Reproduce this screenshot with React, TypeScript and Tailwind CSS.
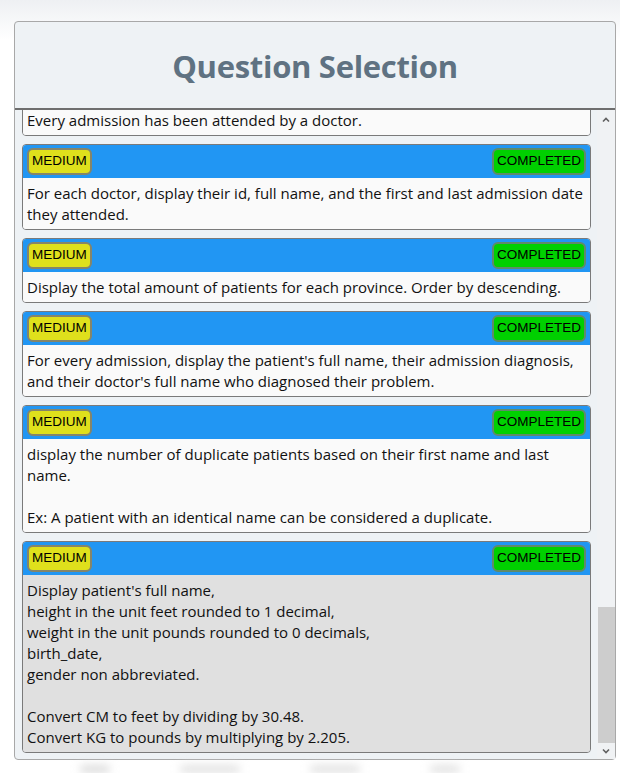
import React from 'react';

type Question = { difficulty: string; status: string; text: string[]; active?: boolean };

const questions: Question[] = [
  { difficulty: 'MEDIUM', status: 'COMPLETED', text: ['Every admission has been attended by a doctor.'] },
  {
    difficulty: 'MEDIUM',
    status: 'COMPLETED',
    text: ['For each doctor, display their id, full name, and the first and last admission date they attended.'],
  },
  {
    difficulty: 'MEDIUM',
    status: 'COMPLETED',
    text: ['Display the total amount of patients for each province. Order by descending.'],
  },
  {
    difficulty: 'MEDIUM',
    status: 'COMPLETED',
    text: [
      "For every admission, display the patient's full name, their admission diagnosis, and their doctor's full name who diagnosed their problem.",
    ],
  },
  {
    difficulty: 'MEDIUM',
    status: 'COMPLETED',
    text: [
      'display the number of duplicate patients based on their first name and last name.',
      '',
      'Ex: A patient with an identical name can be considered a duplicate.',
    ],
  },
  {
    difficulty: 'MEDIUM',
    status: 'COMPLETED',
    active: true,
    text: [
      "Display patient's full name,",
      'height in the unit feet rounded to 1 decimal,',
      'weight in the unit pounds rounded to 0 decimals,',
      'birth_date,',
      'gender non abbreviated.',
      '',
      'Convert CM to feet by dividing by 30.48.',
      'Convert KG to pounds by multiplying by 2.205.',
    ],
  },
];

function Card({ q }: { q: Question }) {
  return (
    <div className="shrink-0 overflow-hidden rounded-[4px] border border-[#7a7a7a]">
      <div className="flex h-[33px] items-center justify-between bg-[#2196f3] px-[4px]">
        <span className="flex h-[27px] items-center rounded-[6px] border-2 border-[#85856a] bg-[#dfe01c] px-[3px] font-['Liberation_Sans',Arial,sans-serif] text-[13.5px] text-black">
          {q.difficulty}
        </span>
        <span className="flex h-[27px] items-center rounded-[6px] border-2 border-[#5f8a6a] bg-[#00d000] px-[3px] font-['Liberation_Sans',Arial,sans-serif] text-[13.5px] text-black">
          {q.status}
        </span>
      </div>
      <div
        className={`px-[4px] pb-[4px] pt-[5px] text-[15px] leading-[21px] text-[#111] ${q.active ? 'bg-[#e0e0e0]' : 'bg-[#fafafa]'}`}
      >
        {q.text.map((line, i) => (
          <div key={i} className="min-h-[21px]">
            {line}
          </div>
        ))}
      </div>
    </div>
  );
}

export default function App() {
  return (
    <div className="relative h-[773px] w-[620px] overflow-hidden bg-gradient-to-b from-[#eef0f3] from-[0px] to-white to-[40px] font-['Open_Sans',sans-serif]">
      <div className="absolute bottom-[0px] left-[80px] flex gap-[70px] blur-[4px]">
        <span className="h-[8px] w-[30px] rounded-full bg-[#dcdcdc]"></span>
        <span className="h-[8px] w-[60px] rounded-full bg-[#e2e2e2]"></span>
        <span className="h-[8px] w-[50px] rounded-full bg-[#e2e2e2]"></span>
        <span className="h-[8px] w-[30px] rounded-full bg-[#e2e2e2]"></span>
      </div>
      <div className="pl-[14px] pt-[21px]">
        <div className="flex h-[739px] w-[602px] flex-col rounded-[4px] border border-[#a8a8a8] bg-[#eef2f5]">
          <div className="flex h-[88px] shrink-0 items-center justify-center border-b-2 border-[#6e6e6e]">
            <h1 className="pt-[2px] text-[31px] font-bold tracking-[-0.3px] text-[#5f7282]">Question Selection</h1>
          </div>
          <div className="flex min-h-0 flex-1">
            <div className="flex min-h-0 flex-1 flex-col justify-end gap-[8px] overflow-hidden pb-[6px] pl-[7px] pr-[6px]">
              {questions.map((q, i) => (
                <Card key={i} q={q} />
              ))}
            </div>
            <div className="flex w-[18px] flex-col items-center bg-[#f0f2f4] py-[2px]">
              <svg width="10" height="10" viewBox="0 0 10 10" className="mt-[3px]">
                <path d="M2 6.5 L5 3.5 L8 6.5" fill="none" stroke="#606060" strokeWidth="1.6" />
              </svg>
              <div className="flex-1"></div>
              <div className="h-[136px] w-[17px] bg-[#cdcdcd]"></div>
              <svg width="10" height="10" viewBox="0 0 10 10" className="mb-[1px] mt-[3px]">
                <path d="M2 3.5 L5 6.5 L8 3.5" fill="none" stroke="#606060" strokeWidth="1.6" />
              </svg>
            </div>
          </div>
        </div>
      </div>
    </div>
  );
}
